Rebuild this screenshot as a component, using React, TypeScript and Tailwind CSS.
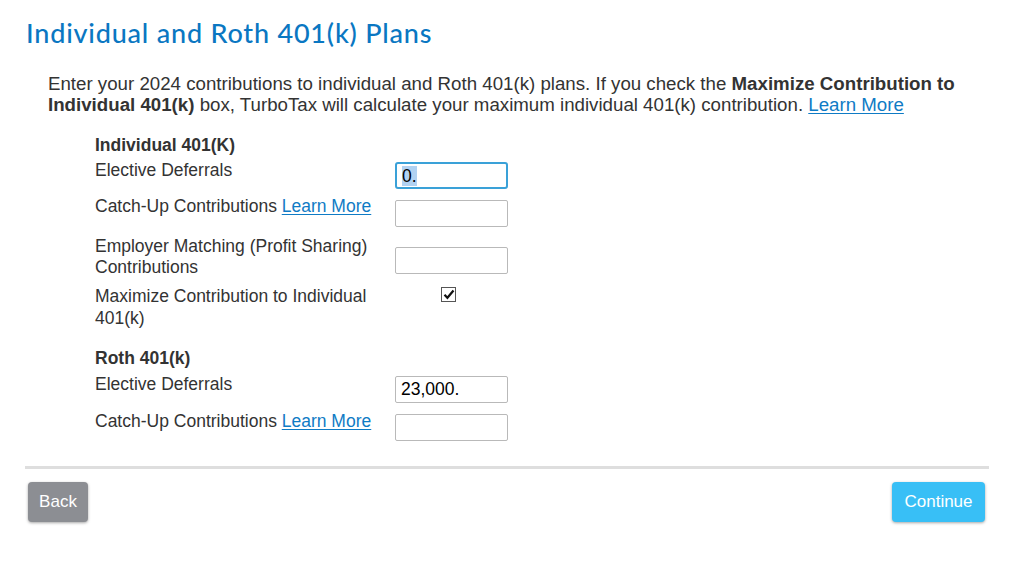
import React from 'react';

const LABEL = 'w-[300px] text-[17.5px] leading-[21px] text-[#333]';

function Field({ value, focused }: { value?: string; focused?: boolean }) {
  return (
    <div
      className={`w-[113px] h-[27px] bg-white flex items-center px-[5px] text-[17.5px] text-black ${
        focused ? 'border-2 border-[#3aa1d8] rounded-[3px] px-[4px]' : 'border border-[#b9b9b9] rounded-[2px]'
      }`}
    >
      {focused && value ? <span className="bg-[#b1d2f2] leading-[20px]">{value}</span> : value}
    </div>
  );
}

function LearnMore() {
  return <a className="text-[#0f7bc5] underline underline-offset-2 decoration-1 cursor-pointer">Learn More</a>;
}

export default function App() {
  return (
    <div className="min-h-screen bg-white font-['Liberation_Sans',Arial,sans-serif]">
      <div className="ml-[25px] w-[965px] pt-[17px]">
        <h1 className="font-['Lato','Noto_Sans',sans-serif] text-[27px] leading-[32px] font-medium tracking-[0.8px] text-[#0a77c2] pl-[1px]">
          Individual and Roth 401(k) Plans
        </h1>

        <p className="mt-[24px] pl-[23px] pr-[20px] text-[18.7px] leading-[21px] text-[#333]">
          Enter your 2024 contributions to individual and Roth 401(k) plans. If you check the{' '}
          <b>Maximize Contribution to Individual 401(k)</b> box, TurboTax will calculate your maximum
          individual 401(k) contribution. <LearnMore />
        </p>

        <div className="pl-[70px]">
          {/* Individual */}
          <div className="mt-[20px] text-[17.5px] leading-[21px] font-bold text-[#333]">Individual 401(K)</div>

          <div className="mt-[4px] flex items-start">
            <div className={LABEL}>Elective Deferrals</div>
            <div className="mt-[2px]">
              <Field value="0." focused />
            </div>
          </div>

          <div className="mt-[7px] flex items-start">
            <div className={LABEL}>
              Catch-Up Contributions <LearnMore />
            </div>
            <div className="mt-[4px]">
              <Field />
            </div>
          </div>

          <div className="mt-[9px] flex items-start">
            <div className={LABEL}>
              Employer Matching (Profit Sharing)
              <br />
              Contributions
            </div>
            <div className="mt-[11px]">
              <Field />
            </div>
          </div>

          <div className="mt-[7px] flex items-start">
            <div className="w-[300px] text-[17.5px] leading-[22px] text-[#333]">
              Maximize Contribution to Individual
              <br />
              401(k)
            </div>
            <div className="w-[113px] pl-[46px] mt-[2px]">
              <div className="w-[15px] h-[15px] border border-[#555] bg-white flex items-center justify-center">
                <svg width="12" height="11" viewBox="0 0 12 11">
                  <path d="M1.5 5.8 L4.4 8.8 L10.5 1.5" fill="none" stroke="#111" strokeWidth="2.2" />
                </svg>
              </div>
            </div>
          </div>

          {/* Roth */}
          <div className="mt-[19px] text-[17.5px] leading-[21px] font-bold text-[#333]">Roth 401(k)</div>

          <div className="mt-[5px] flex items-start">
            <div className={LABEL}>Elective Deferrals</div>
            <div className="mt-[2px]">
              <Field value="23,000." />
            </div>
          </div>

          <div className="mt-[8px] flex items-start">
            <div className={LABEL}>
              Catch-Up Contributions <LearnMore />
            </div>
            <div className="mt-[3px]">
              <Field />
            </div>
          </div>
        </div>

        <div className="mt-[25px] h-[3px] w-[964px] bg-[#dedede]" />

        <div className="mt-[13px] flex justify-between pl-[3px] pr-[5px]">
          <button className="w-[60px] h-[40px] rounded-[4px] bg-[#8c8e93] text-white text-[17px] shadow-[0_1px_3px_rgba(0,0,0,0.35)]">
            Back
          </button>
          <button className="w-[93px] h-[40px] rounded-[4px] bg-[#38bff6] text-white text-[17px] shadow-[0_1px_3px_rgba(0,0,0,0.35)]">
            Continue
          </button>
        </div>
      </div>
    </div>
  );
}
